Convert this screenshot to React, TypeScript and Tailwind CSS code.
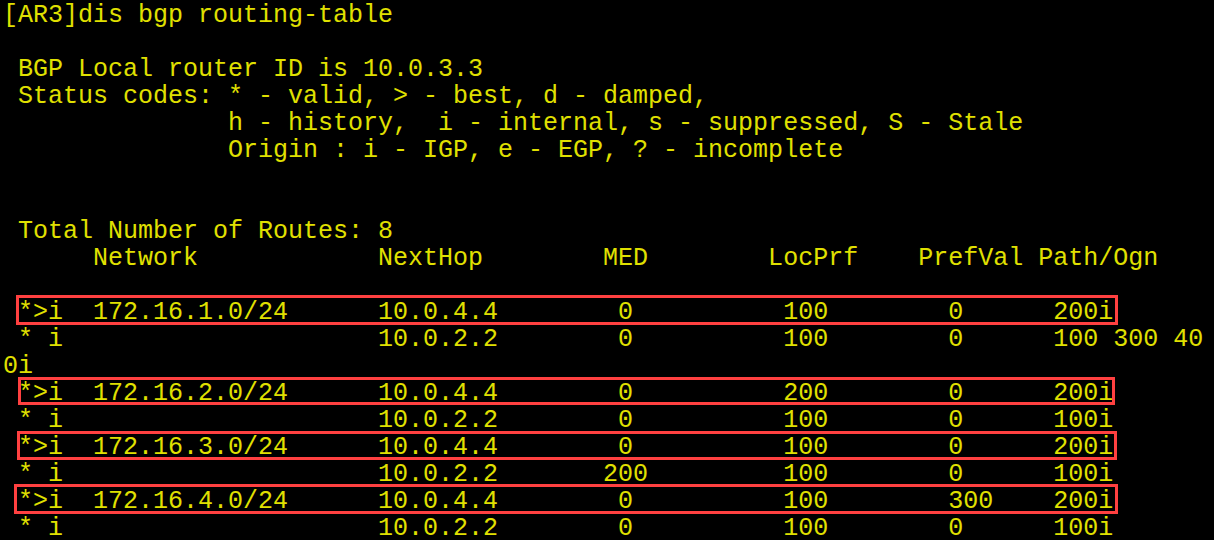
import React from 'react';

// place text fragments at fixed terminal columns
const place = (parts: [number, string][]) => {
  let s = '';
  parts.forEach(([col, text]) => {
    s = s.padEnd(col) + text;
  });
  return s;
};

interface Line {
  text: string;
  box?: { left: number; top: number; bottom: number; width: number };
}

const route = (status: string, net: string, hop: string, med: [number, string], loc: string, pref: string, path: string) =>
  place([[1, status], [6, net], [25, hop], med, [52, loc], [63, pref], [70, path]]);

const LINES: Line[] = [
  { text: '[AR3]dis bgp routing-table' },
  { text: '' },
  { text: ' BGP Local router ID is 10.0.3.3' },
  { text: ' Status codes: * - valid, > - best, d - damped,' },
  { text: '               h - history,  i - internal, s - suppressed, S - Stale' },
  { text: '               Origin : i - IGP, e - EGP, ? - incomplete' },
  { text: '' },
  { text: '' },
  { text: ' Total Number of Routes: 8' },
  { text: place([[6, 'Network'], [25, 'NextHop'], [40, 'MED'], [51, 'LocPrf'], [61, 'PrefVal'], [69, 'Path/Ogn']]) },
  { text: '' },
  { text: route('*>i', '172.16.1.0/24', '10.0.4.4', [41, '0'], '100', '0', '200i'), box: { left: 16, top: -4, bottom: 1, width: 1102 } },
  { text: route('* i', '', '10.0.2.2', [41, '0'], '100', '0', '100 300 40') },
  { text: '0i' },
  { text: route('*>i', '172.16.2.0/24', '10.0.4.4', [41, '0'], '200', '0', '200i'), box: { left: 18, top: -3, bottom: 2, width: 1097 } },
  { text: route('* i', '', '10.0.2.2', [41, '0'], '100', '0', '100i') },
  { text: route('*>i', '172.16.3.0/24', '10.0.4.4', [41, '0'], '100', '0', '200i'), box: { left: 17, top: -3, bottom: 1, width: 1100 } },
  { text: route('* i', '', '10.0.2.2', [40, '200'], '100', '0', '100i') },
  { text: route('*>i', '172.16.4.0/24', '10.0.4.4', [41, '0'], '100', '300', '200i'), box: { left: 14, top: -4, bottom: 1, width: 1104 } },
  { text: route('* i', '', '10.0.2.2', [41, '0'], '100', '0', '100i') },
];

export default function App() {
  return (
    <div className="w-[1214px] h-[540px] overflow-hidden bg-black pl-[3px] pt-[2px] font-['Liberation_Mono',monospace] text-[25px] leading-[27px] text-[#e0e000]">
      {LINES.map((line, i) => (
        <div key={i} className="relative h-[27px] whitespace-pre">
          {line.text}
          {line.box && (
            <span
              className="absolute border-[3px] border-[#ff4040]"
              style={{ left: line.box.left - 3, top: line.box.top, bottom: line.box.bottom, width: line.box.width }}
            />
          )}
        </div>
      ))}
    </div>
  );
}
